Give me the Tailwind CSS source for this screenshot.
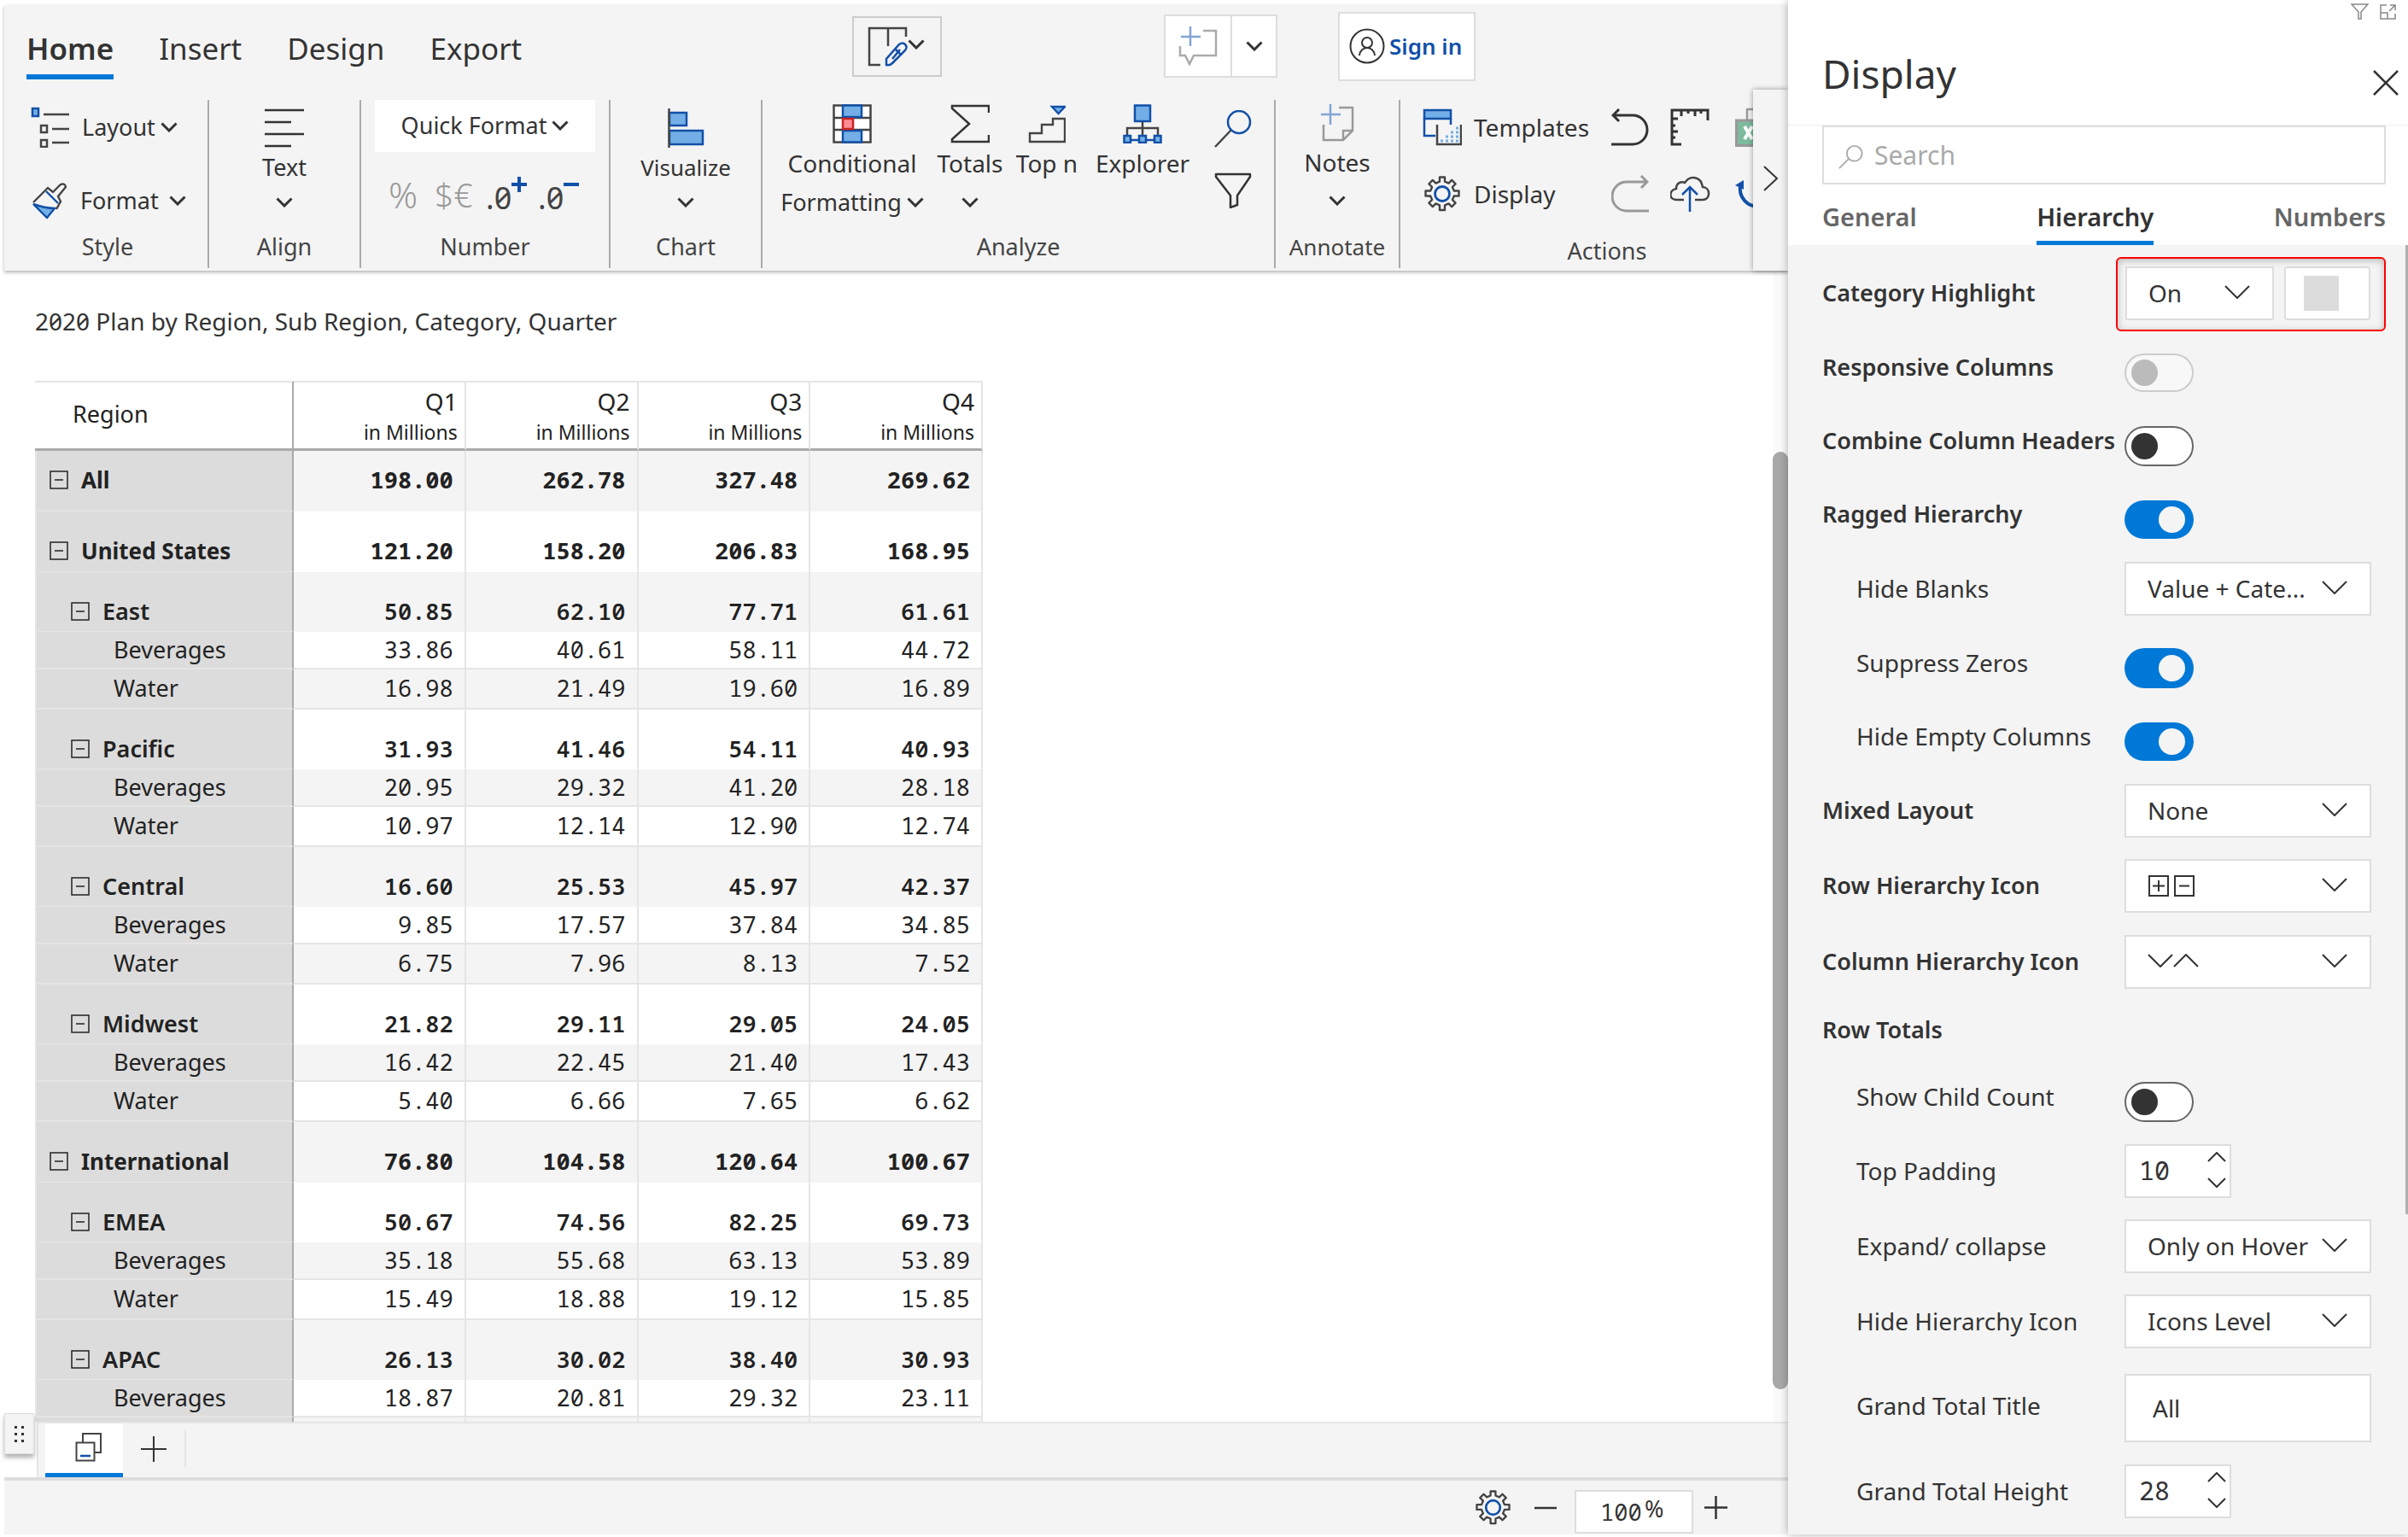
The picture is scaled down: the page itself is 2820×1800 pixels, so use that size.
<!DOCTYPE html>
<html lang="en">
<head>
<meta charset="utf-8">
<title>2020 Plan by Region</title>
<script src="https://cdn.jsdelivr.net/npm/@tailwindcss/browser@4"></script>
</head>
<body class="h-screen overflow-hidden bg-white font-['Noto_Sans','Open_Sans',sans-serif] text-[27px] leading-[40px] text-[#333] slashed-zero">
<!-- Shared icon shapes -->
<svg class="hidden" aria-hidden="true">
  <symbol id="chev" viewBox="0 0 20 12"><path d="M1.500 1.500 10 10l8.500-8.500" fill="none" stroke="currentColor" stroke-width="3"/></symbol>
  <symbol id="thin" viewBox="0 0 30 16"><path d="M1 1 15 15 29 1" fill="none" stroke="currentColor" stroke-width="2"/></symbol>
  <symbol id="minusbox" viewBox="0 0 22 22"><path d="M1 1h20v20H1zM6 11h10" fill="none" stroke="currentColor" stroke-width="1.500"/></symbol>
  <symbol id="gear" viewBox="0 0 42 42">
    <path fill="none" stroke="#444" stroke-width="2.400" stroke-linejoin="round" d="M18 1.500h6v5.200l4.500 1.900 3.700-3.700 4.400 4.400-3.700 3.700 1.900 4.500h5.700v6h-5.700l-1.900 4.500 3.700 3.700-4.400 4.400-3.700-3.700-4.500 1.900v5.700h-6v-5.700l-4.500-1.900-3.700 3.700-4.400-4.400 3.700-3.700-1.900-4.500H1.500v-6h5.700l1.900-4.500-3.700-3.700 4.400-4.400 3.700 3.700 4.500-1.900z"/>
    <circle cx="21" cy="21" r="8.500" fill="none" stroke="#1150a8" stroke-width="2.800"/>
  </symbol>
</svg>

<div class="flex h-full pb-[3px]">
<main class="flex min-w-0 flex-1 flex-col pt-[6px]">

  <header class="relative z-10 ml-[5px] shrink-0 bg-[#f4f4f4] pb-[3px] shadow-[0_2px_4px_rgba(0,0,0,0.3)]">
    <div class="flex h-[96px] items-center">
      <nav class="mb-[9px] ml-[26px] flex gap-[53px] self-end text-[35px] leading-[50px]" aria-label="Ribbon tabs">
        <a href="#home" aria-current="page" class="border-b-[6px] border-[#0078d7] pb-[5px] font-semibold">Home</a>
        <a href="#insert">Insert</a>
        <a href="#design">Design</a>
        <a href="#export">Export</a>
      </nav>
      <button aria-label="Edit layout" class="mr-[260px] ml-auto flex h-[71px] w-[105px] items-center border-2 border-[#ccc] pl-[16px]">
        <svg class="h-[47px] w-[47px]" viewBox="0 0 47 47" fill="none"><path d="M15 45H2V2h43v10M24 2v21" stroke="#444" stroke-width="2.500"/><path d="M22 45v-7l15-17q4-3 7 0t0 7L29 43q-3 3-7 2zM33 27l6 6M29 38l9-11" stroke="#1150a8" stroke-width="2.500"/></svg>
        <svg class="mb-1 h-[12px] w-[20px]"><use href="#chev"/></svg>
      </button>
      <div class="mr-[71px] flex h-[74px] w-[133px] border-2 border-[#ddd] bg-white">
        <button aria-label="Add comment" class="flex flex-1 items-center justify-center border-r-2 border-[#ddd]">
          <svg class="h-[46px] w-[46px]" viewBox="0 0 46 46" fill="none"><path d="M29 5h15v29H18l-5 10-5-10H2V23" stroke="#aaa" stroke-width="2.500"/><path d="M14 0v23M3 12h23" stroke="#82a5d6" stroke-width="2.500"/></svg>
        </button>
        <button aria-label="Comment options" class="flex w-[51px] items-center justify-center"><svg class="h-[12px] w-[20px]"><use href="#chev"/></svg></button>
      </div>
      <button class="mr-[366px] flex h-[81px] w-[161px] items-center gap-[5px] border-2 border-[#ddd] bg-white pl-[11px] text-[26px] font-semibold text-[#1150a8]">
        <svg class="h-[42px] w-[42px]" viewBox="0 0 42 42" fill="none" stroke="#333" stroke-width="2"><circle cx="21" cy="21" r="19.500"/><circle cx="21" cy="17" r="6"/><path d="M12 32c1-12 17-12 18 0"/></svg>
        Sign in
      </button>
    </div>

    <div class="mt-[15px] flex h-[197px]">
      <section class="flex w-[240px] shrink-0 flex-col border-r-2 border-[#aaa]">
        <div class="flex h-[152px] flex-col gap-[26px] pt-[2px] pl-[31px]">
          <button class="flex h-[60px] items-center">
            <svg class="mr-[14px] h-[48px] w-[46px]" viewBox="0 0 46 48" fill="none" stroke="#444" stroke-width="2.500"><path d="M15 9h30M25 26h20M25 42h20"/><path d="M12 22h7v8h-7zM12 39h7v8h-7z"/><path d="M2 2h7v9H2z" fill="#73afe6" stroke="#1150a8"/></svg>
            Layout<svg class="ml-[6px] h-[12px] w-[20px]"><use href="#chev"/></svg>
          </button>
          <button class="flex h-[60px] items-center">
            <svg class="mr-[14px] h-[44px] w-[44px]" viewBox="0 0 44 44" fill="none" stroke="#444" stroke-width="2.400"><path d="m3 24 17-17 6 5 9-9q5-2 6 3l-9 11 3 6-5 9"/><path d="m18 11 14 14" stroke="#1150a8"/><path d="M3 26q14 5 25 5L19 42z" fill="#73afe6" stroke="#1150a8"/></svg>
            Format<svg class="ml-[12px] h-[12px] w-[20px]"><use href="#chev"/></svg>
          </button>
        </div>
        <h2 class="pl-[4px] text-center text-[#444]">Style</h2>
      </section>

      <section class="flex w-[178px] shrink-0 flex-col border-r-2 border-[#aaa]">
        <button class="flex h-[152px] flex-col items-center pt-[10px]">
          <svg class="h-[46px] w-[46px]" viewBox="0 0 46 46" stroke="#333" stroke-width="2.500"><path d="M0 2h46M0 16h31M0 30h46M0 44h31"/></svg>
          <span class="mt-[3px]">Text</span>
          <svg class="mt-[15px] h-[12px] w-[20px]"><use href="#chev"/></svg>
        </button>
        <h2 class="text-center text-[#444]">Align</h2>
      </section>

      <section class="flex w-[292px] shrink-0 flex-col border-r-2 border-[#aaa]">
        <div class="h-[152px] px-[16px]">
          <button class="flex h-[61px] w-full items-center justify-center gap-[6px] bg-white pb-[2px]">Quick Format<svg class="h-[12px] w-[20px]"><use href="#chev"/></svg></button>
          <div class="mt-[20px] flex h-[60px] items-center pl-[16px]">
            <button class="w-[54px] text-left text-[42px] font-light text-[#999]">%</button>
            <button class="w-[60px] text-left text-[39px] font-light text-[#999]">$€</button>
            <button aria-label="Increase decimals" class="flex w-[61px] items-center text-[36px] text-[#444]"><span class="mt-2">.0</span><svg class="mb-6 h-[18px] w-[18px]" viewBox="0 0 18 18" stroke="#1150a8" stroke-width="4"><path d="M9 0v18M0 9h18"/></svg></button>
            <button aria-label="Decrease decimals" class="flex items-center text-[36px] text-[#444]"><span class="mt-2">.0</span><svg class="mb-6 h-[18px] w-[18px]" viewBox="0 0 18 18" stroke="#1150a8" stroke-width="4"><path d="M0 9h18"/></svg></button>
          </div>
        </div>
        <h2 class="text-center text-[#444]">Number</h2>
      </section>

      <section class="flex w-[178px] shrink-0 flex-col border-r-2 border-[#aaa]">
        <button class="flex h-[152px] flex-col items-center pt-[10px]">
          <svg class="h-[46px] w-[43px]" viewBox="0 0 43 46" fill="#73afe6" stroke="#1150a8" stroke-width="2.500"><path d="M2 5h20v15H2zM2 26h39v16H2z"/><path d="M1.500 0v46" stroke="#444"/></svg>
          <span class="mt-[3px] text-[26px]">Visualize</span>
          <svg class="mt-[15px] h-[12px] w-[20px]"><use href="#chev"/></svg>
        </button>
        <h2 class="text-center text-[#444]">Chart</h2>
      </section>

      <section class="flex w-[601px] shrink-0 flex-col border-r-2 border-[#aaa]">
        <div class="flex h-[152px] gap-[8px] pl-[16px]">
          <button class="flex w-[178px] flex-col items-center pt-[5px]">
            <svg class="h-[46px] w-[46px]" viewBox="0 0 46 46" stroke-width="2.500"><path d="M1.500 1.500h43v43h-43zM1.500 16h43M1.500 30h43" fill="#fff" stroke="#444"/><path d="M12 1.500h22V15H12zM12 31h22v13.500H12z" fill="#73afe6" stroke="#1150a8"/><path d="M12 17h12v12H12z" fill="#ff8c95" stroke="#c22"/></svg>
            <span class="mt-[3px] text-[28px]">Conditional</span>
            <span class="mt-[6px] flex items-center gap-[6px]">Formatting<svg class="h-[12px] w-[20px]"><use href="#chev"/></svg></span>
          </button>
          <button class="flex w-[82px] flex-col items-center pt-[5px]">
            <svg class="h-[46px] w-[46px]" viewBox="0 0 46 46" fill="none" stroke="#333" stroke-width="2.500"><path d="M45 10V2H2v3l20 18L2 41v3h43v-8"/></svg>
            <span class="mt-[3px] text-[28px]">Totals</span>
            <svg class="mt-[20px] h-[12px] w-[20px]"><use href="#chev"/></svg>
          </button>
          <button class="flex w-[82px] flex-col items-center pt-[5px]">
            <svg class="h-[46px] w-[44px]" viewBox="0 0 44 46" fill="none" stroke="#444" stroke-width="2.400"><path d="M2 44V34h14V24h13v-7h14v27z"/><path d="M28 3h15l-7.500 8z" fill="#73afe6" stroke="#1150a8"/></svg>
            <span class="mt-[3px] text-[28px]">Top n</span>
          </button>
          <button class="flex w-[126px] flex-col items-center pt-[5px]">
            <svg class="h-[46px] w-[46px]" viewBox="0 0 46 46" fill="#73afe6" stroke="#1150a8" stroke-width="2.500"><path d="M23 20v18M5 38V28h36v10" fill="none" stroke="#444"/><path d="M5 42h36"/><path d="M14 1.500h18V20H14zM1.500 37h7.500v8H1.500zM19 37h8v8h-8zM37 37h7.500v8H37z"/></svg>
            <span class="mt-[3px] text-[28px]">Explorer</span>
          </button>
          <div class="flex w-[70px] flex-col items-center pt-[12px]">
            <button aria-label="Search"><svg class="h-[44px] w-[44px]" viewBox="0 0 44 44" fill="none"><path d="M1 43 20 23" stroke="#444" stroke-width="2.500"/><circle cx="29" cy="14" r="13" stroke="#1150a8" stroke-width="2.500"/></svg></button>
            <button aria-label="Filter" class="mt-[29px]"><svg class="h-[42px] w-[44px]" viewBox="0 0 44 42" fill="none" stroke="#333" stroke-width="2.500"><path d="M2 2h40v3L27 27v11l-8 3V27L2 5z" stroke-linejoin="round"/></svg></button>
          </div>
        </div>
        <h2 class="text-center text-[#444]">Analyze</h2>
      </section>

      <section class="flex w-[146px] shrink-0 flex-col border-r-2 border-[#aaa]">
        <button class="flex h-[152px] flex-col items-center pt-[5px]">
          <svg class="h-[44px] w-[40px]" viewBox="0 0 40 44" fill="none"><path d="M22 4h16v27L27 42H4V24M38 31H27v11" stroke="#999" stroke-width="2.500"/><path d="M12 0v24M1 12h23" stroke="#82a5d6" stroke-width="2.500"/></svg>
          <span class="mt-[4px] text-[28px]">Notes</span>
          <svg class="mt-[19px] h-[12px] w-[20px]"><use href="#chev"/></svg>
        </button>
        <h2 class="text-center text-[26px] text-[#444]">Annotate</h2>
      </section>

      <section class="flex min-w-0 flex-1 flex-col overflow-hidden">
        <div class="grid h-[159px] grid-cols-[221px_69px_76px_64px] grid-rows-[60px_60px] items-center gap-y-[18px] pt-[2px] pl-[26px]">
          <button class="flex items-center gap-[14px] text-[28px]">
            <svg class="h-[44px] w-[46px]" viewBox="0 0 46 44" fill="none"><path d="M2 2h31v10H2z" fill="#73afe6" stroke="#1150a8" stroke-width="2.500"/><path d="M2 12v20h13M33 12v7" stroke="#1150a8" stroke-width="2.500"/><path d="M17 19v23h28V19" stroke="#444" stroke-width="2.500"/><path d="M21 38h21M27 33h15M33 28h9M39 23h3" stroke="#73afe6" stroke-width="3" stroke-dasharray="3 3"/></svg>
            Templates
          </button>
          <button aria-label="Undo"><svg class="h-[44px] w-[44px]" viewBox="0 0 44 44" fill="none" stroke="#333" stroke-width="3"><path d="M0 42h25a17 17 0 0 0 0-34H2M9 1 2 8l7 7"/></svg></button>
          <button aria-label="Ruler"><svg class="h-[44px] w-[46px]" viewBox="0 0 46 44" fill="none" stroke="#333" stroke-width="3"><path d="M13 42H2V2h42v12M13 2v7M21 2v4M29 2v7M36 2v4M2 12h7M2 20h4M2 27h7M2 34h4"/></svg></button>
          <button aria-label="Export to Excel"><svg class="h-[46px] w-[46px]" viewBox="0 0 46 46" fill="none"><path d="M14 14V2h30v42H20" stroke="#999" stroke-width="2.500"/><path d="M1.500 15H32v29.500H1.500z" fill="#7dba9e" stroke="#999" stroke-width="3"/><path d="m11 22 9 15M20 22l-9 15" stroke="#fff" stroke-width="4"/></svg></button>
          <button class="flex items-center gap-[14px] text-[28px]"><svg class="h-[42px] w-[46px]"><use href="#gear"/></svg>Display</button>
          <button aria-label="Redo"><svg class="h-[44px] w-[44px]" viewBox="0 0 44 44" fill="none" stroke="#999" stroke-width="3"><path d="M44 42H18a17 17 0 0 1 0-34h24M35 1l7 7-7 7"/></svg></button>
          <button aria-label="Upload"><svg class="h-[42px] w-[48px]" viewBox="2 0 48 42" fill="none"><path d="M18 28H10C0 28 0 17 9 15c0-7 6-9 10-7 6-9 19-8 21 5 10 1 9 15 0 15h-9" stroke="#444" stroke-width="2.500"/><path d="M25 42V14M16 22l9-9 9 9" stroke="#1150a8" stroke-width="2.500"/></svg></button>
          <button aria-label="Refresh"><svg class="h-[42px] w-[46px]" viewBox="0 0 46 42" fill="none"><path d="M6 11c-2 14 8 26 24 25" stroke="#1150a8" stroke-width="4"/><path d="M0 11 10 5v11z" fill="#1150a8"/></svg></button>
        </div>
        <h2 class="pl-[30px] text-center text-[#444]">Actions</h2>
      </section>
    </div>
    <button aria-label="More ribbon commands" class="absolute top-[99px] right-0 bottom-0 flex w-[41px] items-center justify-center bg-[#f4f4f4] pb-[4px] shadow-[0_0_6px_rgba(0,0,0,0.4)]">
      <svg class="h-[32px] w-[18px]" viewBox="0 0 18 32" fill="none" stroke="#333" stroke-width="2"><path d="m1 2 15 14L1 30"/></svg>
    </button>
  </header>

  <div class="flex min-h-0 flex-1">
    <div class="min-w-0 flex-1 overflow-hidden pl-[41px]">
      <h1 class="mt-[39px] text-[28px]">2020 Plan by Region, Sub Region, Category, Quarter</h1>
      <table class="mt-[50px] w-[1110px] table-fixed border-separate border-spacing-0 text-[#222]">
        <colgroup><col class="w-[303px]"><col><col><col><col></colgroup>
        <thead>
          <tr class="h-[82px]" id="heads">
            <th scope="col" class="border-t-2 border-r-2 border-b-3 border-t-[#e5e5e5] border-r-[#aaa] border-b-[#aaa] pb-[3px] pl-[44px] text-left font-normal">Region</th>
          </tr>
        </thead>
        <tbody id="rows"></tbody>
      </table>
    </div>
    <div class="flex w-[18px] flex-col bg-[#fafafa] pt-[212px] pb-[38px]"><div class="flex-1 rounded-full bg-[#a8a8a8]"></div></div>
  </div>

  <div class="relative ml-[43px] flex h-[65px] shrink-0 items-stretch border-t-2 border-l-2 border-[#e5e5e5] bg-[#f4f4f4]">
    <button aria-label="Move sheet tabs" class="absolute top-[-12px] left-[-40px] grid h-[48px] w-[35px] grid-cols-[3px_3px] content-center justify-center gap-[5px] border border-[#ddd] bg-[#f4f4f4] shadow-[0_4px_5px_rgba(0,0,0,0.3)]">
      <i class="size-[3px] bg-[#333]"></i><i class="size-[3px] bg-[#333]"></i><i class="size-[3px] bg-[#333]"></i><i class="size-[3px] bg-[#333]"></i><i class="size-[3px] bg-[#333]"></i><i class="size-[3px] bg-[#333]"></i>
    </button>
    <button aria-label="Sheet 1" class="ml-[8px] flex w-[91px] justify-center border-b-[5px] border-[#0078d7] bg-white pt-[11px] pl-[9px]">
      <svg class="h-[34px] w-[31px]" viewBox="0 0 31 34" fill="none" stroke="#444" stroke-width="2"><path d="M9 11V1h21v22h-8M1.500 11.500h21v21h-21z"/><path d="M6 27h12" stroke="#1150a8" stroke-width="2.500"/></svg>
    </button>
    <button aria-label="Add sheet" class="mt-[8px] mb-[12px] flex w-[74px] items-center justify-center border-r-2 border-[#e5e5e5]">
      <svg class="h-[30px] w-[30px]" viewBox="0 0 30 30" stroke="#333" stroke-width="2"><path d="M15 0v30M0 15h30"/></svg>
    </button>
  </div>

  <footer class="ml-[5px] flex h-[67px] shrink-0 items-center border-t-4 border-[#ddd] bg-[#f4f4f4]">
    <button aria-label="Settings" class="ml-auto"><svg class="h-[41px] w-[41px]"><use href="#gear"/></svg></button>
    <button aria-label="Zoom out" class="ml-[28px]"><svg class="h-[26px] w-[26px]" viewBox="0 0 26 26" stroke="#333" stroke-width="2.500"><path d="M0 13h26"/></svg></button>
    <label class="mt-[10px] mr-[13px] ml-[21px] flex h-[51px] w-[139px] items-center border-2 border-[#ddd] bg-white pl-[28px]">
      <input aria-label="Zoom" value="100" class="w-[52px] font-['Noto_Sans_Mono','DejaVu_Sans_Mono',monospace] text-[27px] leading-[40px] outline-none"><span class="mb-[8px] text-[27px]">%</span>
    </label>
    <button aria-label="Zoom in" class="mr-[71px]"><svg class="h-[27px] w-[27px]" viewBox="0 0 27 27" stroke="#333" stroke-width="2.500"><path d="M13.500 0v27M0 13.500h27"/></svg></button>
  </footer>
</main>

<aside class="relative z-20 flex w-[726px] shrink-0 flex-col bg-white shadow-[0_0_10px_rgba(0,0,0,0.3)]">
  <div class="flex h-[24px] justify-end gap-[13px] pt-[3px] pr-[14px]">
    <button aria-label="Visual filters"><svg class="h-[19px] w-[21px]" viewBox="0 0 21 19" fill="none" stroke="#888" stroke-width="1.500"><path d="M1 1h19l-8 9v8H9v-8z"/></svg></button>
    <button aria-label="Focus mode"><svg class="h-[18px] w-[19px]" viewBox="0 0 19 18" fill="none" stroke="#888" stroke-width="1.500"><path d="M8 1H1v16h17v-6M1 10h8v7M12 1h6v6M18 1l-7 7"/></svg></button>
  </div>
  <div class="flex h-[123px] items-center justify-between border-b border-[#f0f0f0] pr-[11px] pl-[40px]">
    <h2 class="mt-[2px] text-[46px] leading-[60px]">Display</h2>
    <button aria-label="Close" class="mt-[23px]"><svg class="h-[30px] w-[30px]" viewBox="0 0 30 30" stroke="#333" stroke-width="2.500"><path d="m1 1 28 28M29 1 1 29"/></svg></button>
  </div>
  <label class="mr-[26px] ml-[40px] flex h-[69px] items-center gap-[13px] border-2 border-[#ddd] pl-[17px]">
    <svg class="mt-[4px] h-[30px] w-[31px]" viewBox="0 0 31 30" fill="none" stroke="#aaa" stroke-width="2"><path d="m1 29 12-12"/><circle cx="20" cy="10.500" r="9.500"/></svg>
    <input type="search" placeholder="Search" aria-label="Search" class="w-full text-[30px] leading-[40px] outline-none placeholder:text-[#aaa]">
  </label>
  <nav class="mr-[26px] ml-[40px] flex h-[71px] items-end justify-between text-[29px] font-semibold text-[#666]" aria-label="Display sections">
    <a href="#general" class="h-[53px]">General</a>
    <a href="#hierarchy" aria-current="page" class="h-[53px] border-b-[5px] border-[#0078d7] text-[#333]">Hierarchy</a>
    <a href="#numbers" class="h-[53px]">Numbers</a>
  </nav>

  <form class="relative min-h-0 flex-1 overflow-hidden bg-[#f4f4f4] pt-[12px] pl-[40px]">
    <div class="absolute top-0 right-0 h-[1135px] w-[3px] bg-[#b0b0b0]"></div>
    <div class="absolute top-[14px] right-[26px] h-[87px] w-[316px] rounded-[6px] border-2 border-[#f00] shadow-[inset_0_2px_8px_rgba(0,0,0,0.25)]"></div>

    <div class="flex h-[88px] items-center">
      <label for="hl" class="w-[354px] font-semibold">Category Highlight</label>
      <div class="relative ml-[1px] w-[174px]"><select id="hl" class="h-[63px] w-full appearance-none border-2 border-[#ddd] bg-white pl-[25px] text-[28px]"><option>On</option></select><svg class="pointer-events-none absolute top-[22px] right-[28px] h-[16px] w-[30px]"><use href="#thin"/></svg></div>
      <button type="button" aria-label="Highlight colour" class="ml-[12px] flex h-[63px] w-[101px] items-center rounded-[4px] border-2 border-[#ddd] bg-white pl-[21px]"><span class="size-[41px] bg-[#dcdcdc]"></span></button>
    </div>
    <div class="flex h-[86px] items-center">
      <label for="rc" class="w-[354px] font-semibold">Responsive Columns</label>
      <span class="relative mt-[12px] h-[45px] w-[81px]"><input id="rc" type="checkbox" disabled class="block h-full w-full appearance-none rounded-full border-2 border-[#ccc] bg-[#f8f8f8]"><i class="pointer-events-none absolute top-[7px] left-[8px] size-[31px] rounded-full bg-[#bbb]"></i></span>
    </div>
    <div class="flex h-[86px] items-center">
      <label for="cc" class="w-[354px] font-semibold whitespace-nowrap">Combine Column Headers</label>
      <span class="relative mt-[12px] h-[47px] w-[81px]"><input id="cc" type="checkbox" class="block h-full w-full appearance-none rounded-full border-2 border-[#666] bg-white"><i class="pointer-events-none absolute top-[8px] left-[8px] size-[31px] rounded-full bg-[#333]"></i></span>
    </div>
    <div class="flex h-[86px] items-center">
      <label for="rh" class="w-[354px] font-semibold">Ragged Hierarchy</label>
      <span class="relative mt-[12px] h-[45px] w-[81px]"><input id="rh" type="checkbox" checked class="block h-full w-full appearance-none rounded-full bg-[#0078d7]"><i class="pointer-events-none absolute top-[7px] right-[10px] size-[31px] rounded-full bg-[#f4f4f4]"></i></span>
    </div>
    <div class="flex h-[88px] items-center">
      <label for="hb" class="w-[354px] pl-[40px] text-[28px]">Hide Blanks</label>
      <div class="relative w-[289px]"><select id="hb" class="h-[63px] w-full appearance-none border-2 border-[#ddd] bg-white pl-[25px] text-[28px]"><option>Value + Cate...</option></select><svg class="pointer-events-none absolute top-[22px] right-[28px] h-[16px] w-[30px]"><use href="#thin"/></svg></div>
    </div>
    <div class="flex h-[86px] items-center">
      <label for="sz" class="w-[354px] pl-[40px] text-[28px]">Suppress Zeros</label>
      <span class="relative mt-[12px] h-[47px] w-[81px]"><input id="sz" type="checkbox" checked class="block h-full w-full appearance-none rounded-full bg-[#0078d7]"><i class="pointer-events-none absolute top-[8px] right-[10px] size-[31px] rounded-full bg-[#f4f4f4]"></i></span>
    </div>
    <div class="flex h-[86px] items-center">
      <label for="he" class="w-[354px] pl-[40px] text-[28px]">Hide Empty Columns</label>
      <span class="relative mt-[12px] h-[45px] w-[81px]"><input id="he" type="checkbox" checked class="block h-full w-full appearance-none rounded-full bg-[#0078d7]"><i class="pointer-events-none absolute top-[7px] right-[10px] size-[31px] rounded-full bg-[#f4f4f4]"></i></span>
    </div>
    <div class="flex h-[88px] items-center">
      <label for="ml" class="w-[354px] font-semibold">Mixed Layout</label>
      <div class="relative w-[289px]"><select id="ml" class="h-[63px] w-full appearance-none border-2 border-[#ddd] bg-white pl-[25px] text-[28px]"><option>None</option></select><svg class="pointer-events-none absolute top-[22px] right-[28px] h-[16px] w-[30px]"><use href="#thin"/></svg></div>
    </div>
    <div class="flex h-[88px] items-center">
      <label for="ri" class="w-[354px] font-semibold">Row Hierarchy Icon</label>
      <div class="relative w-[289px]"><select id="ri" class="block h-[63px] w-full appearance-none border-2 border-[#ddd] bg-white"></select>
        <svg class="pointer-events-none absolute top-[19px] left-[27px] h-[26px] w-[56px]" viewBox="0 0 56 26" fill="none" stroke="#333" stroke-width="2"><path d="M2 1h22v23H2zM32 1h22v23H32zM6 12.500h14M13 6v13M37 12.500h12"/></svg>
        <svg class="pointer-events-none absolute top-[22px] right-[28px] h-[16px] w-[30px]"><use href="#thin"/></svg></div>
    </div>
    <div class="flex h-[90px] items-center">
      <label for="ci" class="w-[354px] font-semibold">Column Hierarchy Icon</label>
      <div class="relative w-[289px]"><select id="ci" class="block h-[63px] w-full appearance-none border-2 border-[#ddd] bg-white"></select>
        <svg class="pointer-events-none absolute top-[22px] left-[27px] h-[16px] w-[60px]" viewBox="0 0 60 16" fill="none" stroke="#333" stroke-width="2"><path d="m1 1 14 14L29 1M31 15 45 1l14 14"/></svg>
        <svg class="pointer-events-none absolute top-[22px] right-[28px] h-[16px] w-[30px]"><use href="#thin"/></svg></div>
    </div>
    <h3 class="flex h-[70px] items-center font-semibold">Row Totals</h3>
    <div class="flex h-[86px] items-center">
      <label for="sc" class="w-[354px] pl-[40px] text-[28px]">Show Child Count</label>
      <span class="relative mt-[12px] h-[47px] w-[81px]"><input id="sc" type="checkbox" class="block h-full w-full appearance-none rounded-full border-2 border-[#666] bg-white"><i class="pointer-events-none absolute top-[8px] left-[8px] size-[31px] rounded-full bg-[#333]"></i></span>
    </div>
    <div class="flex h-[88px] items-center">
      <label for="tp" class="w-[354px] pl-[40px] text-[28px]">Top Padding</label>
      <div class="flex h-[63px] w-[125px] items-center border-2 border-[#ddd] bg-white">
        <input id="tp" inputmode="numeric" value="10" class="w-[95px] pl-[15px] font-['Noto_Sans_Mono','DejaVu_Sans_Mono',monospace] text-[30px] outline-none">
        <span class="mb-[3px] flex flex-col gap-[18px]"><button type="button" aria-label="Increase" class="block"><svg class="block h-[12px] w-[22px]" viewBox="0 0 22 12" fill="none" stroke="#333" stroke-width="2"><path d="M1 11 11 1l10 10"/></svg></button><button type="button" aria-label="Decrease" class="block"><svg class="block h-[12px] w-[22px]" viewBox="0 0 22 12" fill="none" stroke="#333" stroke-width="2"><path d="m1 1 10 10L21 1"/></svg></button></span>
      </div>
    </div>
    <div class="flex h-[88px] items-center">
      <label for="ec" class="w-[354px] pl-[40px] text-[28px]">Expand/ collapse</label>
      <div class="relative w-[289px]"><select id="ec" class="h-[63px] w-full appearance-none border-2 border-[#ddd] bg-white pl-[25px] text-[28px]"><option>Only on Hover</option></select><svg class="pointer-events-none absolute top-[22px] right-[28px] h-[16px] w-[30px]"><use href="#thin"/></svg></div>
    </div>
    <div class="flex h-[88px] items-center">
      <label for="hh" class="w-[354px] pl-[40px] text-[28px]">Hide Hierarchy Icon</label>
      <div class="relative w-[289px]"><select id="hh" class="h-[63px] w-full appearance-none border-2 border-[#ddd] bg-white pl-[25px] text-[28px]"><option>Icons Level</option></select><svg class="pointer-events-none absolute top-[22px] right-[28px] h-[16px] w-[30px]"><use href="#thin"/></svg></div>
    </div>
    <div class="flex h-[110px] items-center">
      <label for="gt" class="w-[354px] pl-[40px] text-[28px]">Grand Total Title</label>
      <input id="gt" value="All" class="mt-[6px] h-[80px] w-[289px] border-2 border-[#ddd] bg-white pl-[31px] text-[28px] outline-none">
    </div>
    <div class="flex h-[90px] items-center">
      <label for="gh" class="w-[354px] pl-[40px] text-[28px]">Grand Total Height</label>
      <div class="flex h-[63px] w-[125px] items-center border-2 border-[#ddd] bg-white">
        <input id="gh" inputmode="numeric" value="28" class="w-[95px] pl-[15px] font-['Noto_Sans_Mono','DejaVu_Sans_Mono',monospace] text-[30px] outline-none">
        <span class="mb-[3px] flex flex-col gap-[18px]"><button type="button" aria-label="Increase" class="block"><svg class="block h-[12px] w-[22px]" viewBox="0 0 22 12" fill="none" stroke="#333" stroke-width="2"><path d="M1 11 11 1l10 10"/></svg></button><button type="button" aria-label="Decrease" class="block"><svg class="block h-[12px] w-[22px]" viewBox="0 0 22 12" fill="none" stroke="#333" stroke-width="2"><path d="m1 1 10 10L21 1"/></svg></button></span>
      </div>
    </div>
  </form>
</aside>
</div>

<script>
// Plan data: [level, name, Q1..Q4]; level 0 = region, 1 = sub region, 2 = first category, 3 = second category
const plan = [
  [0,'All','198.00','262.78','327.48','269.62'],
  [0,'United States','121.20','158.20','206.83','168.95'],
  [1,'East','50.85','62.10','77.71','61.61'],
  [2,'Beverages','33.86','40.61','58.11','44.72'],
  [3,'Water','16.98','21.49','19.60','16.89'],
  [1,'Pacific','31.93','41.46','54.11','40.93'],
  [2,'Beverages','20.95','29.32','41.20','28.18'],
  [3,'Water','10.97','12.14','12.90','12.74'],
  [1,'Central','16.60','25.53','45.97','42.37'],
  [2,'Beverages','9.85','17.57','37.84','34.85'],
  [3,'Water','6.75','7.96','8.13','7.52'],
  [1,'Midwest','21.82','29.11','29.05','24.05'],
  [2,'Beverages','16.42','22.45','21.40','17.43'],
  [3,'Water','5.40','6.66','7.65','6.62'],
  [0,'International','76.80','104.58','120.64','100.67'],
  [1,'EMEA','50.67','74.56','82.25','69.73'],
  [2,'Beverages','35.18','55.68','63.13','53.89'],
  [3,'Water','15.49','18.88','19.12','15.85'],
  [1,'APAC','26.13','30.02','38.40','30.93'],
  [2,'Beverages','18.87','20.81','29.32','23.11'],
  [3,'','','','',''],
];
const rowClass = ['h-[71px] font-bold', 'h-[70px] font-semibold', 'h-[44px]', 'h-[47px]'];
const nameClass = ['pl-[15px] text-[26px] font-bold', 'pl-[40px] font-semibold', 'pl-[90px] font-normal', 'pl-[90px] font-normal'];
const lineClass = ['border-b border-b-transparent', 'border-b border-b-transparent', 'border-b-2 border-b-[#e5e5e5]', 'border-b-2 border-b-[#e5e5e5]'];
const nameLine = ['border-b border-b-[#e5e5e5]', 'border-b border-b-[#e5e5e5]', 'border-b-2 border-b-[#e5e5e5]', 'border-b-2 border-b-[#e5e5e5]'];
for (const q of ['Q1','Q2','Q3','Q4'])
  heads.insertAdjacentHTML('beforeend', `<th scope="col" class="border-t-2 border-r-2 border-b-3 border-t-[#e5e5e5] border-r-[#e5e5e5] border-b-[#aaa] pr-[8px] text-right font-normal"><div class="text-[28px] leading-[38px]">${q}</div><div class="text-[23px] leading-[34px]">in Millions</div></th>`);
plan.forEach(([lv, name, ...vals], i) => {
  const tall = i === 0 ? 'pb-[3px]' : lv < 2 ? 'pt-[22px]' : 'pb-[1px]';
  const icon = lv < 2 ? '<svg class="mr-[15px] h-[22px] w-[22px]"><use href="#minusbox"/></svg>' : '';
  rows.insertAdjacentHTML('beforeend', `<tr class="${rowClass[lv]} ${i % 2 ? 'bg-white' : 'bg-[#f4f4f4]'}">
    <th scope="row" class="border-r-2 border-l-2 border-r-[#aaa] border-l-[#e5e5e5] bg-[#dcdcdc] text-left ${tall} ${nameClass[lv]} ${nameLine[lv]}"><div class="flex items-center">${icon}${name}</div></th>
    ${vals.map(v => `<td class="border-r-2 border-r-[#e5e5e5] pr-[13px] text-right font-['Noto_Sans_Mono','DejaVu_Sans_Mono',monospace] ${tall} ${lineClass[lv]}">${v}</td>`).join('')}
  </tr>`);
});
</script>
</body>
</html>
